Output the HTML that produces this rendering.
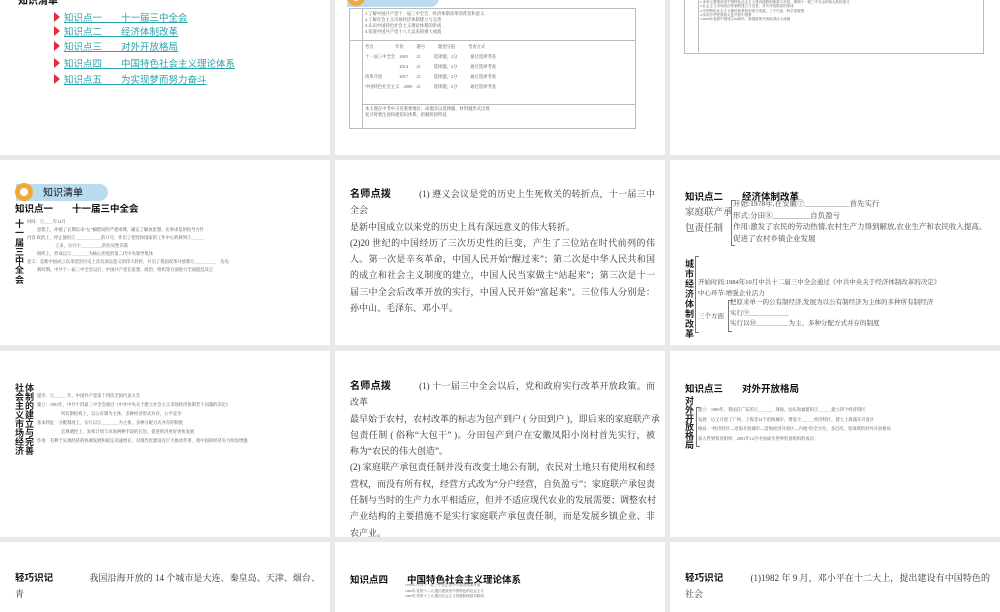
<!DOCTYPE html>
<html><head><meta charset="utf-8"><style>
body{margin:0;width:1000px;height:600px;background:#e9e9e9;position:relative;overflow:hidden;font-family:"Liberation Serif","Noto Serif CJK SC",serif;color:#333}
.p{position:absolute;background:#fff;overflow:hidden}
.a{position:absolute;white-space:nowrap}
.b{font-family:"Liberation Sans","Noto Sans CJK SC",sans-serif;font-weight:bold;color:#111}
.lk{color:#2aa3a8;text-decoration:underline;font-family:"Liberation Sans","Noto Sans CJK SC",sans-serif;font-size:9.5px}
.tri{position:absolute;width:0;height:0;border-top:5px solid transparent;border-bottom:5px solid transparent;border-left:6px solid #e02d3a}
.tx{font-size:9px;line-height:16.3px;color:#333;width:305px}
.tx div{white-space:nowrap;height:16.3px}
.tx .j{text-align:justify;text-align-last:justify}
.sm{font-size:4.3px;color:#555;line-height:8px}
.vt{position:absolute;font-size:9px;line-height:9.5px;width:10px;font-weight:bold;color:#222;font-family:"Liberation Sans","Noto Sans CJK SC",sans-serif}
.br{position:absolute;border-left:1px solid #777;border-top:1px solid #777;border-bottom:1px solid #777;width:3px}
.badge{position:absolute;height:17px;width:92px;background:#b9dcef;border-radius:0 9px 9px 0}
.dot{position:absolute;width:18px;height:18px;border-radius:50%;background:#f3a93a}
.dot:after{content:"";position:absolute;left:5px;top:5px;width:8px;height:8px;border-radius:50%;background:#fff}
.tbl{position:absolute;border:1px solid #bbb}
</style></head><body>

<div class="p" style="left:0;top:0;width:330px;height:155px">
<div class="a b" style="left:18px;top:-8px;font-size:10px">知识清单</div>
<div class="tri" style="left:54px;top:12px"></div><div class="a lk" style="left:64px;top:10px">知识点一　　十一届三中全会</div>
<div class="tri" style="left:54px;top:26px"></div><div class="a lk" style="left:64px;top:24px">知识点二　　经济体制改革</div>
<div class="tri" style="left:54px;top:41px"></div><div class="a lk" style="left:64px;top:39px">知识点三　　对外开放格局</div>
<div class="tri" style="left:54px;top:58px"></div><div class="a lk" style="left:64px;top:56px">知识点四　　中国特色社会主义理论体系</div>
<div class="tri" style="left:54px;top:74px"></div><div class="a lk" style="left:64px;top:72px">知识点五　　为实现梦而努力奋斗</div>
</div>

<div class="p" style="left:335px;top:0;width:330px;height:155px">
<div class="badge" style="left:12px;top:-10px"></div><div class="dot" style="left:12px;top:-12px"></div>
<div class="tbl" style="left:14px;top:8px;width:285px;height:119px"></div>
<div class="a" style="left:27px;top:8px;width:1px;height:120px;background:#bbb"></div>
<div class="a" style="left:14px;top:40px;width:286px;height:1px;background:#bbb"></div>
<div class="a sm" style="left:30px;top:11px;line-height:6px">1.了解中国共产党十一届三中全会、经济体制改革的背景和意义<br>2.了解社会主义市场经济体制建立与完善<br>3.认识中国特色社会主义理论体系的形成<br>4.知道中国共产党十八大以来的重大成就</div>
<div class="a sm" style="left:30px;top:42px;line-height:10px">考点　　　　　年份　　　题号　　　题型分值　　　考查方式<br>十一届三中全会　2005　　21　　　选择题，2分　　　通过选择考查<br>　　　　　　　　2014　　21　　　选择题，2分　　　通过选择考查<br>改革开放　　　　2017　　21　　　选择题，2分　　　通过选择考查<br>中国特色社会主义　2009　21　　　选择题，2分　　　通过选择考查</div>
<div class="a" style="left:28px;top:104px;width:272px;height:1px;background:#bbb"></div>
<div class="a sm" style="left:30px;top:106px;line-height:6px">本主题在中考中占有重要地位，命题多以选择题、材料题形式出现<br>复习时要注意构建知识体系，把握阶段特征</div>
</div>

<div class="p" style="left:670px;top:0;width:330px;height:155px">
<div class="tbl" style="left:14px;top:-5px;width:298px;height:57px"></div>
<div class="a" style="left:28px;top:0;width:1px;height:52px;background:#bbb"></div>
<div class="a sm" style="left:30px;top:0;line-height:4.3px;font-size:3.5px">1.本单元着重讲述中国特色社会主义建设道路的探索与开创，强调十一届三中全会的伟大转折意义<br>2.社会主义市场经济体制的建立与完善，对外开放格局的形成<br>3.中国特色社会主义理论体系的形成与发展，三个代表、科学发展观<br>4.实现中华民族伟大复兴的中国梦<br>5.2009年是新中国成立60周年，我国改革开放取得巨大成就</div>
</div>

<div class="p" style="left:0;top:160px;width:330px;height:185px">
<div class="badge" style="left:16px;top:24px"></div><div class="dot" style="left:15px;top:23px"></div>
<div class="a b" style="left:43px;top:24px;font-size:10px;font-weight:normal">知识清单</div>
<div class="a b" style="left:15px;top:41px;font-size:9.5px">知识点一　　十一届三中全会</div>
<div class="vt" style="left:15px;top:60px;line-height:9.3px">十一届三中全会</div>
<div class="a sm" style="left:27px;top:58px;line-height:8px">时间：①＿＿年12月<br><span style="padding-left:10px">思想上，冲破了长期以来“左”倾错误的严重束缚，确定了解放思想、实事求是的指导方针</span><br>内容 政治上，停止使用②＿＿＿＿＿＿的口号，作出了把党和国家的工作中心转移到③＿＿＿<br><span style="padding-left:28px">上来，实行④＿＿＿＿＿的历史性决策</span><br><span style="padding-left:10px">组织上，形成以⑤＿＿＿＿为核心的党的第二代中央领导集体</span><br>意义：是新中国成立以来党的历史上具有深远意义的伟大转折，开启了我国改革开放新⑥＿＿＿＿＿　历史<br><span style="padding-left:10px">新时期。中共十一届三中全会以后，中国共产党在思想、政治、组织等方面进行全面拨乱反正</span></div>
</div>

<div class="p" style="left:335px;top:160px;width:330px;height:185px">
<div class="a tx" style="left:15px;top:26px">
<div class="j"><b class="b" style="font-size:10px">名师点拨</b>　　　(1) 遵义会议是党的历史上生死攸关的转折点，十一届三中</div>
<div>全会</div>
<div>是新中国成立以来党的历史上具有深远意义的伟大转折。</div>
<div class="j">(2)20 世纪的中国经历了三次历史性的巨变，产生了三位站在时代前列的伟</div>
<div class="j">人。第一次是辛亥革命，中国人民开始“醒过来”；第二次是中华人民共和国</div>
<div class="j">的成立和社会主义制度的建立，中国人民当家做主“站起来”；第三次是十一</div>
<div class="j">届三中全会后改革开放的实行，中国人民开始“富起来”。三位伟人分别是：</div>
<div>孙中山、毛泽东、邓小平。</div>
</div>
</div>

<div class="p" style="left:670px;top:160px;width:330px;height:185px">
<div class="a b" style="left:15px;top:29px;font-size:9.5px">知识点二　　经济体制改革</div>
<div class="a" style="left:15px;top:45px;font-size:9.5px;line-height:16px;color:#444">家庭联产承<br>包责任制</div>
<div class="br" style="left:61px;top:40px;height:44px"></div>
<div class="a" style="left:63px;top:38px;font-size:7.5px;line-height:11.5px;color:#444">开始:1978年,在安徽⑦＿＿＿＿＿＿首先实行<br>形式:分田⑧＿＿＿＿＿自负盈亏<br>作用:激发了农民的劳动热情,农村生产力得到解放,农业生产和农民收入提高。<br>促进了农村乡镇企业发展</div>
<div class="vt" style="left:15px;top:99px;line-height:10px">城市经济体制改革</div>
<div class="br" style="left:25px;top:96px;height:75px"></div>
<div class="a" style="left:28px;top:117px;font-size:6.5px;line-height:11px;color:#444">开始时间:1984年10月中共十二届三中全会通过《中共中央关于经济体制改革的决定》<br>中心环节:增强企业活力</div>
<div class="a" style="left:28px;top:151px;font-size:6.5px;color:#444">三个方面</div>
<div class="br" style="left:58px;top:140px;height:30px"></div>
<div class="a" style="left:60px;top:138px;font-size:6.5px;line-height:10.5px;color:#444">把原来单一的公有制经济,发展为以公有制经济为主体的多种所有制经济<br>实行⑨＿＿＿＿＿＿<br>实行以⑩＿＿＿＿＿为主、多种分配方式并存的制度</div>
</div>

<div class="p" style="left:0;top:351px;width:330px;height:186px">
<div class="vt" style="left:15px;top:33px;line-height:9px">社会主义市场经济</div>
<div class="vt" style="left:25px;top:33px;line-height:9px">体制的建立与完善</div>
<div class="a sm" style="left:37px;top:40px;line-height:9px">提出：①＿＿＿年，中国共产党第十四次全国代表大会<br>建立：1993年，中共十四届三中全会通过《中共中央关于建立社会主义市场经济体制若干问题的决定》<br><span style="padding-left:24px">所有制结构上，以公有制为主体，多种经济形式并存，公平竞争</span><br>基本特征　分配制度上，实行以②＿＿＿＿为主体，多种分配方式并存的制度<br><span style="padding-left:24px">宏观调控上，发挥计划与市场两种手段的长处，促进经济更好更快发展</span><br>作用：有利于实现经济的协调发展和稳定高速增长，对现代化建设有巨大推动作用，使中国的经济实力明显增强</div>
</div>

<div class="p" style="left:335px;top:351px;width:330px;height:186px">
<div class="a tx" style="left:15px;top:27px">
<div class="j"><b class="b" style="font-size:10px">名师点拨</b>　　　(1) 十一届三中全会以后，党和政府实行改革开放政策。而</div>
<div>改革</div>
<div class="j">最早始于农村，农村改革的标志为包产到户 ( 分田到户 )，即后来的家庭联产承</div>
<div class="j">包责任制 ( 俗称“大包干” )。分田包产到户在安徽凤阳小岗村首先实行，被</div>
<div>称为“农民的伟大创造”。</div>
<div class="j">(2) 家庭联产承包责任制并没有改变土地公有制，农民对土地只有使用权和经</div>
<div class="j">营权，而没有所有权，经营方式改为“分户经营，自负盈亏”；家庭联产承包责</div>
<div class="j">任制与当时的生产力水平相适应，但并不适应现代农业的发展需要；调整农村</div>
<div class="j">产业结构的主要措施不是实行家庭联产承包责任制，而是发展乡镇企业、非</div>
<div>农产业。</div>
</div>
</div>

<div class="p" style="left:670px;top:351px;width:330px;height:186px">
<div class="a b" style="left:15px;top:30px;font-size:9.5px">知识点三　　对外开放格局</div>
<div class="vt" style="left:15px;top:46px;line-height:8.8px">对外开放格局</div>
<div class="br" style="left:26px;top:56px;height:38px"></div>
<div class="a sm" style="left:28px;top:54px;line-height:9.7px">建立：1980年，我国在广东的①＿＿＿，珠海，汕头和福建的②＿＿＿建立四个经济特区<br>发展：后又开放了广州、上海等14个沿海城市，增设③＿＿＿经济特区，建立上海浦东开发区<br>格局：“经济特区—沿海开放城市—沿海经济开放区—内地”的全方位、多层次、宽领域的对外开放格局<br>加入世界贸易组织：2001年12月中国成为世界贸易组织的成员</div>
</div>

<div class="p" style="left:0;top:542px;width:330px;height:70px">
<div class="a tx" style="left:15px;top:28px">
<div class="j"><b class="b" style="font-size:9.5px">轻巧识记</b>　　　　我国沿海开放的 14 个城市是大连、秦皇岛、天津、烟台、</div>
<div>青</div>
</div>
</div>

<div class="p" style="left:335px;top:542px;width:330px;height:70px">
<div class="a b" style="left:15px;top:30px;font-size:9.5px">知识点四　　中国特色社会主义理论体系</div>
<div class="a sm" style="left:70px;top:41px;line-height:5.5px;font-size:3.5px">1978年,中共十一届三中全会,邓小平提出改革开放<br>1982年,党的十二大,提出建设有中国特色的社会主义<br>1987年,党的十三大,提出社会主义初级阶段基本路线</div>
</div>

<div class="p" style="left:670px;top:542px;width:330px;height:70px">
<div class="a tx" style="left:15px;top:28px">
<div class="j"><b class="b" style="font-size:9.5px">轻巧识记</b>　　　(1)1982 年 9 月，邓小平在十二大上，提出建设有中国特色的</div>
<div>社会</div>
</div>
</div>
</body></html>
